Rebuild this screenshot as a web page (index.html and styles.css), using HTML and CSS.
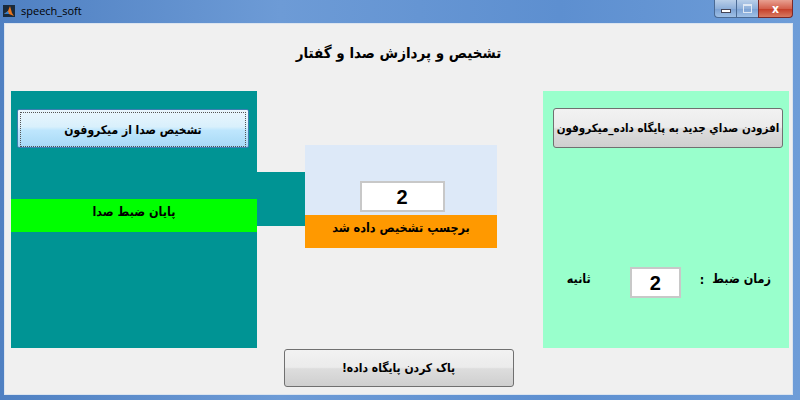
FILE: index.html
```html
<!DOCTYPE html>
<html>
<head>
  <title>speech_soft</title>
  <link rel="stylesheet" href="styles.css">
</head>
<body>
  <div class="window">
    <!-- Title bar -->
    <div class="titlebar">
      <svg class="app-icon" width="12" height="12" viewBox="0 0 12 12">
        <rect width="12" height="12" fill="#1a2a3a"/>
        <path d="M1 9 L5 6 L7 1 L9 8 L11 11 L6 9 Z" fill="#e8741c"/>
        <path d="M1 9 L5 6 L6 9 Z" fill="#2f7fd0"/>
      </svg>
      <span class="app-title">speech_soft</span>
      <div class="controls">
        <span class="ctl ctl-min"><i></i></span>
        <span class="ctl ctl-max"><i></i></span>
        <span class="ctl ctl-close">x</span>
      </div>
    </div>
    <!-- Client area -->
    <div class="client">
      <h1 class="heading" dir="rtl">تشخیص و پردازش صدا و گفتار</h1>
      <div class="main">
        <!-- Recognition panel -->
        <div class="panel-left">
          <button class="btn-mic" dir="rtl"><span>تشخیص صدا از میکروفون</span></button>
          <div class="stop-bar" dir="rtl">پایان ضبط صدا</div>
        </div>
        <div class="connector"></div>
        <!-- Result -->
        <div class="result">
          <div class="result-top">
            <div class="value-box">2</div>
          </div>
          <div class="result-label" dir="rtl">برچسپ تشخیص داده شد</div>
        </div>
        <!-- Add to database panel -->
        <div class="panel-right">
          <button class="btn btn-add" dir="rtl">افزودن صداي جديد به پايگاه داده_ميکروفون</button>
          <div class="time-row">
            <span class="unit" dir="rtl">ثانیه</span>
            <div class="value-box small">2</div>
            <span class="colon">:</span>
            <span class="time-label" dir="rtl">زمان ضبط</span>
          </div>
        </div>
      </div>
      <div class="footer">
        <button class="btn btn-clear" dir="rtl">پاک کردن پایگاه داده!</button>
      </div>
    </div>
  </div>
</body>
</html>
```

FILE: styles.css
```css
body {
  margin: 0;
  font-family: "DejaVu Sans", sans-serif;
  font-stretch: condensed;
}
.window {
  width: 800px;
  height: 400px;
  display: flex;
  flex-direction: column;
  background: linear-gradient(90deg, #4f80c2 0%, #6d9bd6 35%, #5d8fd0 70%, #6e9dd8 100%);
}
.titlebar {
  height: 23px;
  display: flex;
  align-items: center;
  position: relative;
}
.app-icon {
  margin-left: 3px;
  margin-top: -2px;
}
.app-title {
  font-family: "Open Sans", sans-serif;
  font-stretch: normal;
  font-size: 11px;
  color: #000;
  margin-left: 6px;
  margin-top: -2px;
}
.controls {
  position: absolute;
  top: 0;
  right: 7px;
  display: flex;
}
.ctl {
  height: 17px;
  width: 21px;
  border: 1px solid #4a6a94;
  border-top: none;
  background: linear-gradient(#b9cfe9, #8fb0da 50%, #7aa0d2 51%, #9fc0e6);
  display: flex;
  align-items: center;
  justify-content: center;
}
.ctl-min {
  border-bottom-left-radius: 4px;
  border-right: none;
}
.ctl-min i {
  width: 8px;
  height: 2px;
  margin-top: 5px;
  background: #fff;
  border: 1px solid #445;
}
.ctl-max {
  width: 21px;
  border-right: none;
}
.ctl-max i {
  width: 7px;
  height: 6px;
  border: 1px solid #dfe8f4;
  border-top-width: 2px;
}
.ctl-close {
  width: 33px;
  border-bottom-right-radius: 4px;
  border-color: #7a2a2a;
  background: linear-gradient(#e8a091, #d4614d 50%, #c43c26 51%, #d87a62);
  color: #fff;
  font-weight: bold;
  font-size: 12px;
  line-height: 14px;
}
.client {
  flex: 1;
  margin: 0 7px 5px 4px;
  background: #f0f0f0;
  border: 1px solid #dbe4ef;
}
.heading {
  margin: 19px 0 0 0;
  text-align: center;
  font-size: 15px;
  font-weight: bold;
  line-height: 20px;
  color: #000;
}
.main {
  display: flex;
  align-items: flex-start;
  height: 257px;
  margin-top: 28px;
  margin-left: 6px;
}
.panel-left {
  width: 246px;
  height: 257px;
  background: #009494;
}
.btn-mic {
  display: block;
  width: 232px;
  height: 39px;
  margin: 18px 0 0 6px;
  padding: 2px;
  border: 1px solid #3c7fb1;
  border-radius: 2px;
  background: linear-gradient(#eaf6fd, #d9f0fc 45%, #bee6fd 55%, #a7d9f5);
  font-family: inherit;
  font-stretch: condensed;
  font-weight: bold;
  font-size: 12px;
  color: #000;
}
.btn-mic span {
  display: flex;
  align-items: center;
  justify-content: center;
  height: 100%;
  border: 1px dotted #555;
}
.stop-bar {
  margin-top: 51px;
  height: 33px;
  background: #00ff00;
  text-align: center;
  font-weight: bold;
  font-size: 12.5px;
  line-height: 26px;
  color: #000;
}
.connector {
  width: 48px;
  height: 54px;
  margin-top: 81px;
  background: #009494;
}
.result {
  width: 192px;
  margin-top: 54px;
}
.result-top {
  height: 70px;
  background: #dde9f8;
  display: flex;
  justify-content: center;
  align-items: flex-end;
}
.value-box {
  width: 81px;
  height: 27px;
  margin-bottom: 3px;
  margin-left: 2px;
  background: #fff;
  border: 2px solid #c8c8c8;
  font-family: "Liberation Sans", sans-serif;
  font-stretch: normal;
  font-weight: bold;
  font-size: 20px;
  line-height: 28px;
  text-align: center;
  color: #000;
}
.result-label {
  height: 33px;
  background: #ff9900;
  text-align: center;
  font-weight: bold;
  font-size: 12.5px;
  line-height: 26px;
  color: #000;
}
.panel-right {
  width: 246px;
  height: 257px;
  margin-left: 46px;
  background: #99ffcc;
}
.btn {
  display: block;
  border: 1px solid #707070;
  border-radius: 3px;
  background: linear-gradient(#f2f2f2, #ebebeb 48%, #dddddd 52%, #cfcfcf);
  font-family: inherit;
  font-stretch: condensed;
  font-weight: bold;
  font-size: 12px;
  color: #000;
  padding: 0;
  white-space: nowrap;
}
.btn-add {
  width: 230px;
  height: 40px;
  margin: 17px 0 0 10px;
  font-size: 11.5px;
}
.time-row {
  display: flex;
  align-items: center;
  justify-content: flex-end;
  margin-top: 119px;
  padding-right: 18px;
  height: 31px;
  font-weight: bold;
  font-size: 12.5px;
  color: #000;
}
.unit {
  margin-top: -8px;
}
.time-row .value-box.small {
  width: 47px;
  margin: 0 0 0 39px;
}
.colon {
  margin-left: 19px;
  margin-top: -6px;
}
.time-label {
  margin-left: 8px;
  margin-top: -8px;
}
.footer {
  display: flex;
  justify-content: center;
  margin-top: 1px;
}
.btn-clear {
  width: 230px;
  height: 38px;
}
```
